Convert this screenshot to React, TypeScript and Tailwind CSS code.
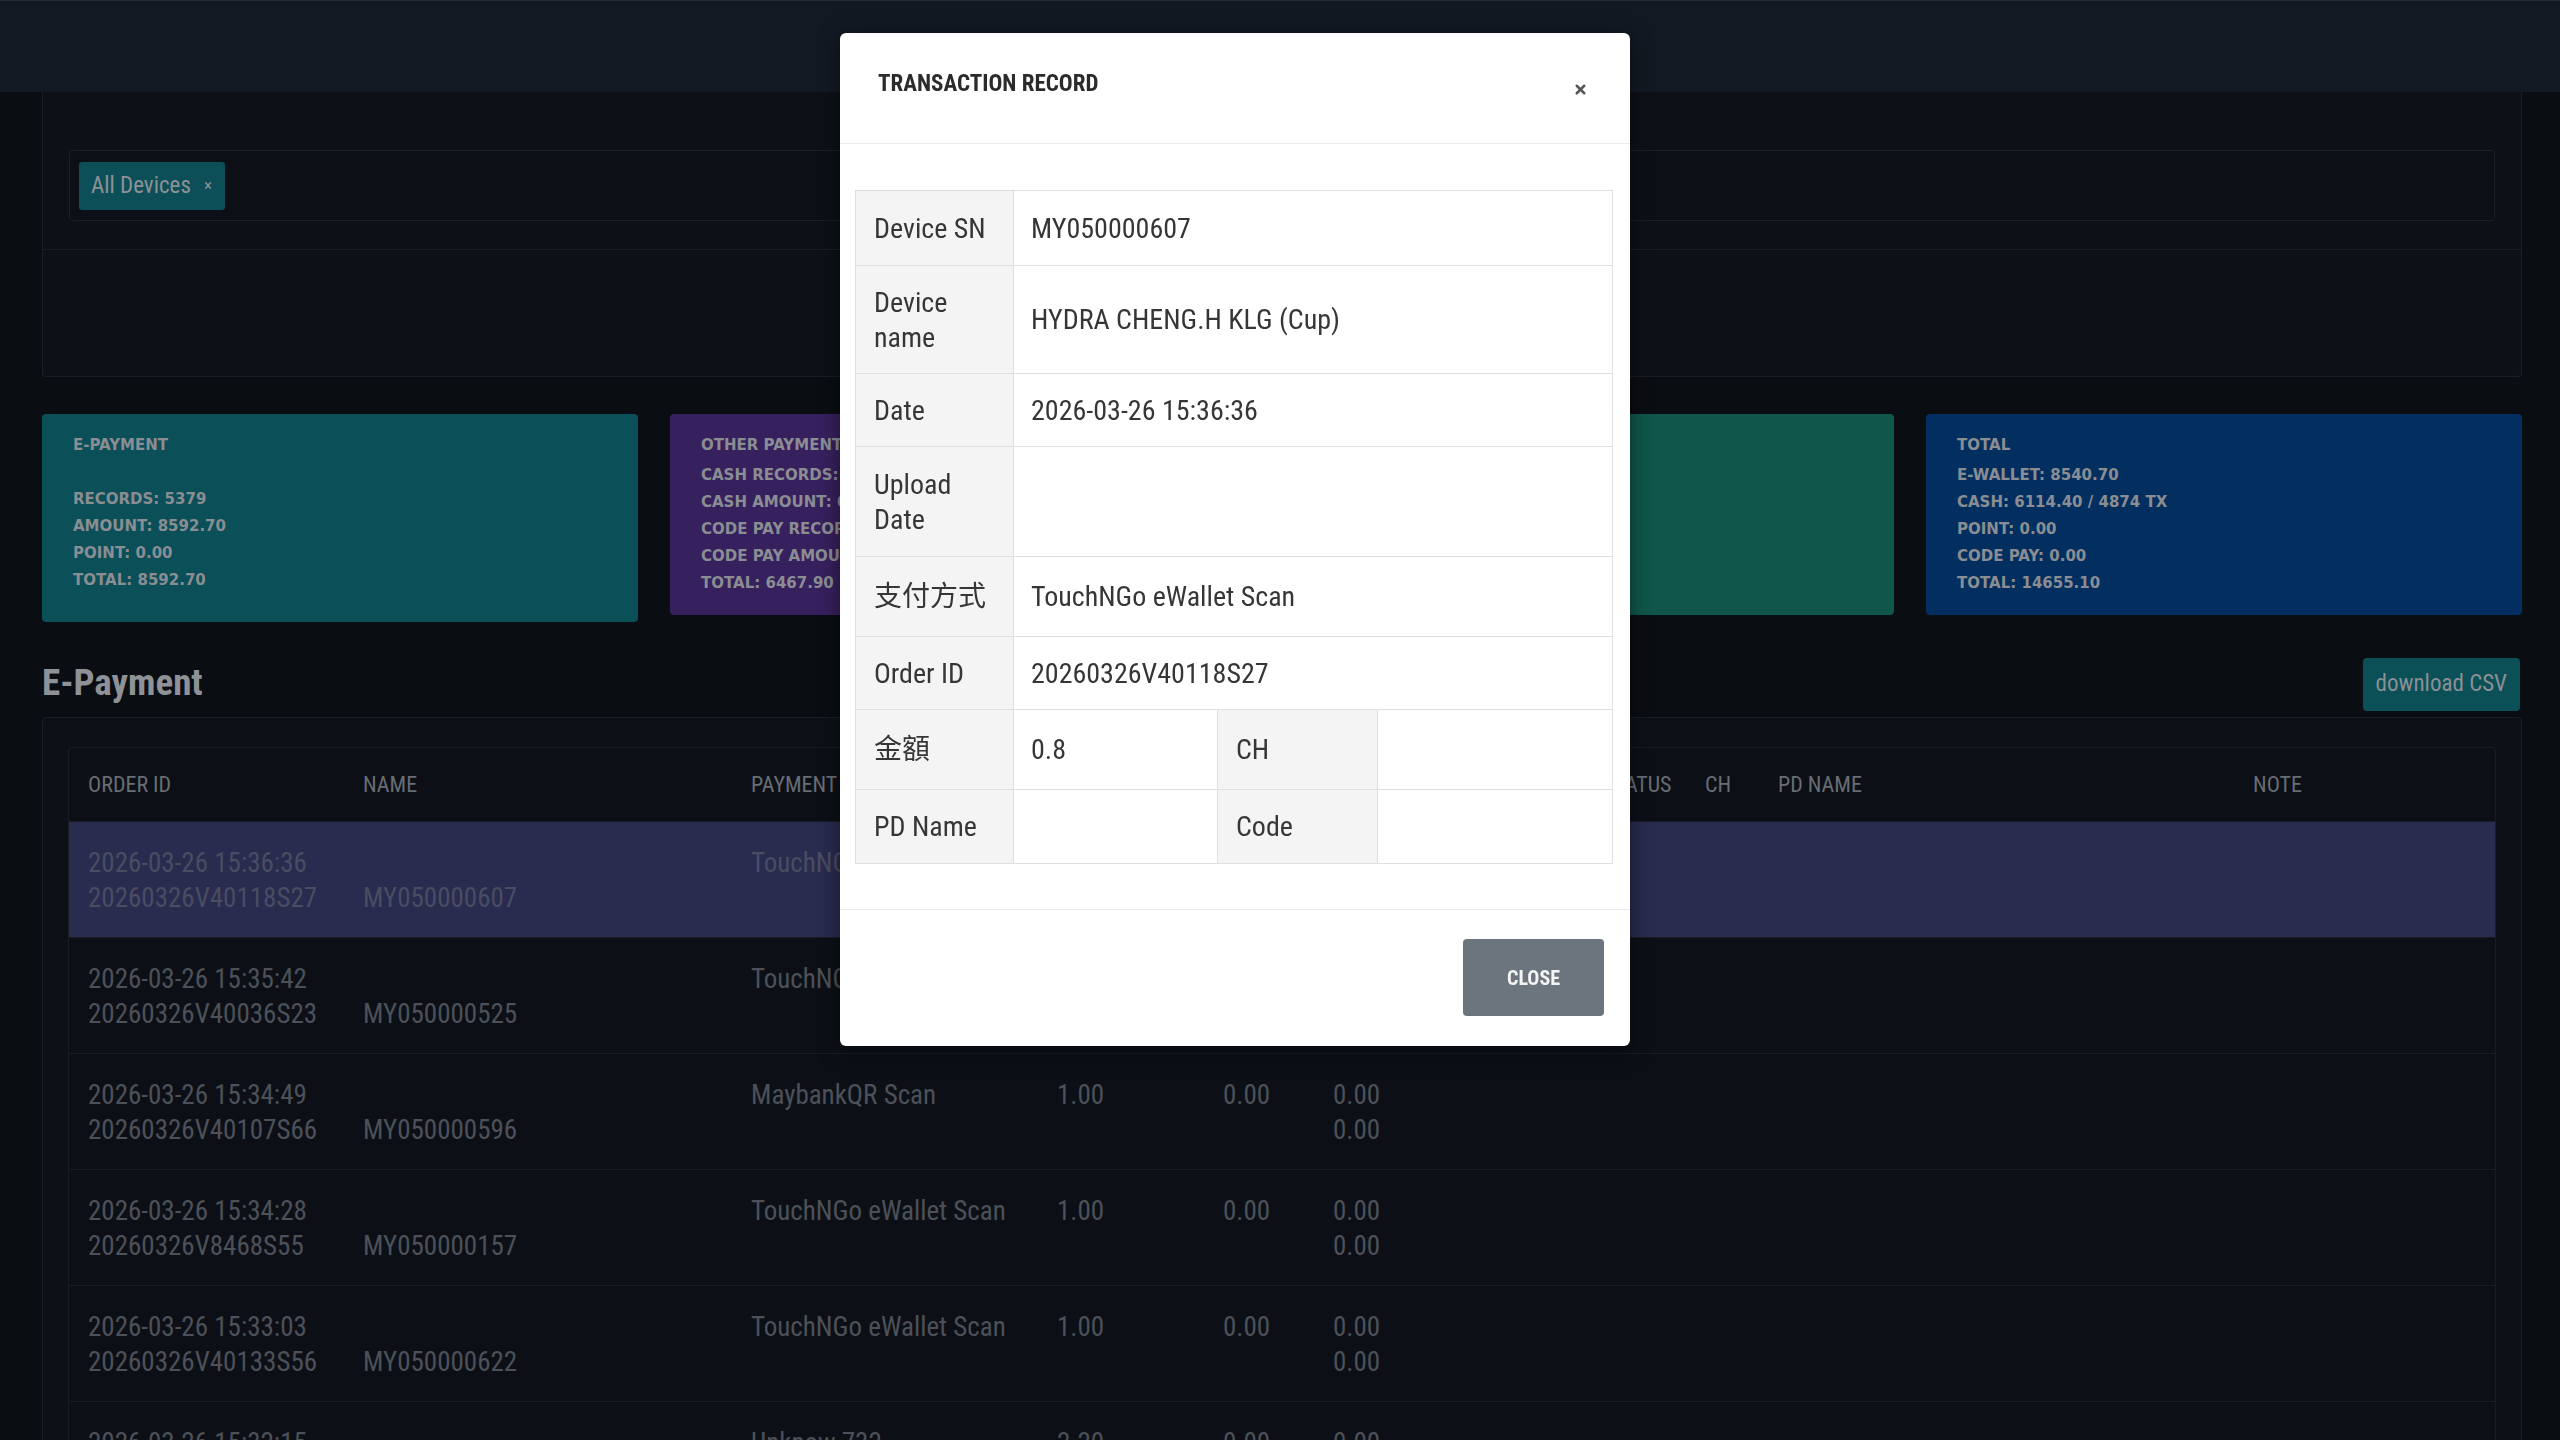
import { X } from 'lucide-react';

const rows = [
  { date: '2026-03-26 15:36:36', id: '20260326V40118S27', sn: 'MY050000607', pay: 'TouchNGo eWallet Scan', amt: '0.80', point: '0.00', paid: '0.00', refund: '0.00', active: true },
  { date: '2026-03-26 15:35:42', id: '20260326V40036S23', sn: 'MY050000525', pay: 'TouchNGo eWallet Scan', amt: '1.00', point: '0.00', paid: '0.00', refund: '0.00' },
  { date: '2026-03-26 15:34:49', id: '20260326V40107S66', sn: 'MY050000596', pay: 'MaybankQR Scan', amt: '1.00', point: '0.00', paid: '0.00', refund: '0.00' },
  { date: '2026-03-26 15:34:28', id: '20260326V8468S55', sn: 'MY050000157', pay: 'TouchNGo eWallet Scan', amt: '1.00', point: '0.00', paid: '0.00', refund: '0.00' },
  { date: '2026-03-26 15:33:03', id: '20260326V40133S56', sn: 'MY050000622', pay: 'TouchNGo eWallet Scan', amt: '1.00', point: '0.00', paid: '0.00', refund: '0.00' },
  { date: '2026-03-26 15:32:15', id: '20260326V40098S31', sn: 'MY050000732', pay: 'Unknow 732', amt: '2.20', point: '0.00', paid: '0.00', refund: '0.00' },
];

const heads = ['ORDER ID', 'NAME', 'PAYMENT', 'AMOUNT', 'POINT', 'PAID', 'STATUS', 'CH', 'PD NAME', 'NOTE'];

const cols = 'grid grid-cols-[275px_388px_306px_166px_110px_270px_102px_73px_475px_1fr] pl-[19px]';

function StatCard({ color, title, lines, gap, pb }: { color: string; title: string; lines: string[]; gap?: boolean; pb: string }) {
  return (
    <div className={`${color} ${pb} rounded-[4px] pl-[31px] pt-[18px] [font-family:'DejaVu_Sans',sans-serif] text-[15px] font-bold text-[#8a8d92] leading-[27px] uppercase`}>
      <div className="mb-[3px]">{title}</div>
      {gap && <div className="h-[24px]" />}
      {lines.map((l) => (
        <div key={l}>{l}</div>
      ))}
    </div>
  );
}

function TransactionModal() {
  const cell = 'border border-[#dfdfdf] align-middle px-[17px] text-[28px] leading-[35px] text-[#363636]';
  const label = `${cell} bg-[#f4f4f4] pl-[18px]`;
  return (
    <div className="fixed inset-0">
      <div className="ml-[840px] mt-[33px] w-[790px] rounded-[6px] bg-white shadow-[0_4px_20px_rgba(0,0,0,0.5)]">
        <div className="flex h-[111px] justify-between border-b border-[#e9ecef] pl-[38px] pr-[42px]">
          <div className="pt-[36px] text-[23px] font-bold leading-[30px] text-[#2b2b2b]">TRANSACTION RECORD</div>
          <X className="mt-[49px] h-[15px] w-[15px] text-[#555]" strokeWidth={4} />
        </div>
        <div className="px-[15px] pb-[45px] pt-[46px]">
          <table className="w-[757px] table-fixed border-collapse">
            <colgroup>
              <col className="w-[158px]" />
              <col className="w-[204px]" />
              <col className="w-[160px]" />
              <col className="w-[235px]" />
            </colgroup>
            <tbody>
              <tr className="h-[75px]">
                <td className={label}>Device SN</td>
                <td className={cell} colSpan={3}>MY050000607</td>
              </tr>
              <tr className="h-[108px]">
                <td className={label}>
                  Device
                  <br />
                  name
                </td>
                <td className={cell} colSpan={3}>HYDRA CHENG.H KLG (Cup)</td>
              </tr>
              <tr className="h-[73px]">
                <td className={label}>Date</td>
                <td className={cell} colSpan={3}>2026-03-26 15:36:36</td>
              </tr>
              <tr className="h-[110px]">
                <td className={label}>
                  Upload
                  <br />
                  Date
                </td>
                <td className={cell} colSpan={3}></td>
              </tr>
              <tr className="h-[80px]">
                <td className={label}>支付方式</td>
                <td className={cell} colSpan={3}>TouchNGo eWallet Scan</td>
              </tr>
              <tr className="h-[73px]">
                <td className={label}>Order ID</td>
                <td className={cell} colSpan={3}>20260326V40118S27</td>
              </tr>
              <tr className="h-[80px]">
                <td className={label}>金額</td>
                <td className={cell}>0.8</td>
                <td className={label}>CH</td>
                <td className={cell}></td>
              </tr>
              <tr className="h-[74px]">
                <td className={label}>PD Name</td>
                <td className={cell}></td>
                <td className={label}>Code</td>
                <td className={cell}></td>
              </tr>
            </tbody>
          </table>
        </div>
        <div className="flex justify-end border-t border-[#e9ecef] pb-[30px] pr-[26px] pt-[29px]">
          <button className="h-[77px] w-[141px] rounded-[4px] bg-[#6c757d] text-[20px] font-bold text-[#f4f4f4]">CLOSE</button>
        </div>
      </div>
    </div>
  );
}

export default function App() {
  return (
    <div className="min-h-screen bg-[#0a0d12] [font-family:'Roboto_Condensed','Noto_Sans_CJK_TC',sans-serif]">
      <div className="h-[92px] border-t border-[#232a35] bg-[#131923]" />

      <div className="pl-[42px] pr-[38px] pb-[40px]">
        <div className="rounded-b-[4px] border border-t-0 border-[#191e27] bg-[#0d1117]">
          <div className="h-[157px] px-[26px] pt-[58px]">
            <div className="flex h-[71px] items-start rounded-[4px] border border-[#1a1f28] bg-[#0c1016] pl-[9px] pt-[11px]">
              <span className="flex h-[48px] items-center gap-[13px] rounded-[3px] bg-[#0c4f58] pl-[12px] pr-[13px] text-[23px] text-[#8d9297]">
                All Devices <span className="text-[17px]">×</span>
              </span>
            </div>
          </div>
          <div className="h-[127px] border-t border-[#191e27]" />
        </div>

        <div className="mt-[37px] grid grid-cols-4 items-start gap-[32px]">
          <StatCard
            color="bg-[#0b4f59]"
            pb="pb-[28px]"
            gap
            title="E-Payment"
            lines={['Records: 5379', 'Amount: 8592.70', 'Point: 0.00', 'Total: 8592.70']}
          />
          <StatCard
            color="bg-[#37205e]"
            pb="pb-[18px]"
            title="Other Payment"
            lines={['Cash Records: 4874', 'Cash Amount: 6114.40', 'Code Pay Records: 0', 'Code Pay Amount: 0.00', 'Total: 6467.90']}
          />
          <StatCard
            color="bg-[#10564a]"
            pb="pb-[18px]"
            title="Point"
            lines={['Records: 0', 'Amount: 0.00', 'Used: 0.00', 'Balance: 0.00', 'Total: 0.00']}
          />
          <StatCard
            color="bg-[#032f60]"
            pb="pb-[18px]"
            title="Total"
            lines={['E-Wallet: 8540.70', 'Cash: 6114.40 / 4874 TX', 'Point: 0.00', 'Code Pay: 0.00', 'Total: 14655.10']}
          />
        </div>

        <div className="mt-[34px] flex h-[53px] items-center justify-between">
          <h2 className="text-[37px] font-bold leading-[44px] text-[#8e9297]">E-Payment</h2>
          <button className="mr-[2px] mt-[4px] h-[53px] rounded-[4px] bg-[#0b4f57] px-[13px] text-[23px] text-[#8b9095]">download CSV</button>
        </div>

        <div className="mt-[8px] rounded-[4px] border border-[#191e27] bg-[#0d1117] px-[25px] pb-[30px] pt-[29px]">
          <div className="rounded-[4px] border border-[#181c24] bg-[#0c1016]">
            <div className={`${cols} h-[73px] items-center text-[22px] text-[#686d74]`}>
              {heads.map((h) => (
                <div key={h}>{h}</div>
              ))}
            </div>
            {rows.map((r) => (
              <div
                key={r.id}
                className={`${cols} h-[116px] border-t border-[#181c24] pt-[24px] text-[27px] leading-[35px] ${
                  r.active ? 'bg-[#292b4f] text-[#4a4d62]' : 'text-[#4c5159]'
                }`}
              >
                <div>
                  <div>{r.date}</div>
                  <div>{r.id}</div>
                </div>
                <div>
                  <div>&nbsp;</div>
                  <div>{r.sn}</div>
                </div>
                <div>{r.pay}</div>
                <div>{r.amt}</div>
                <div>{r.point}</div>
                <div>
                  <div>{r.paid}</div>
                  <div>{r.refund}</div>
                </div>
                <div />
                <div />
                <div />
                <div />
              </div>
            ))}
          </div>
        </div>
      </div>

      <TransactionModal />
    </div>
  );
}
